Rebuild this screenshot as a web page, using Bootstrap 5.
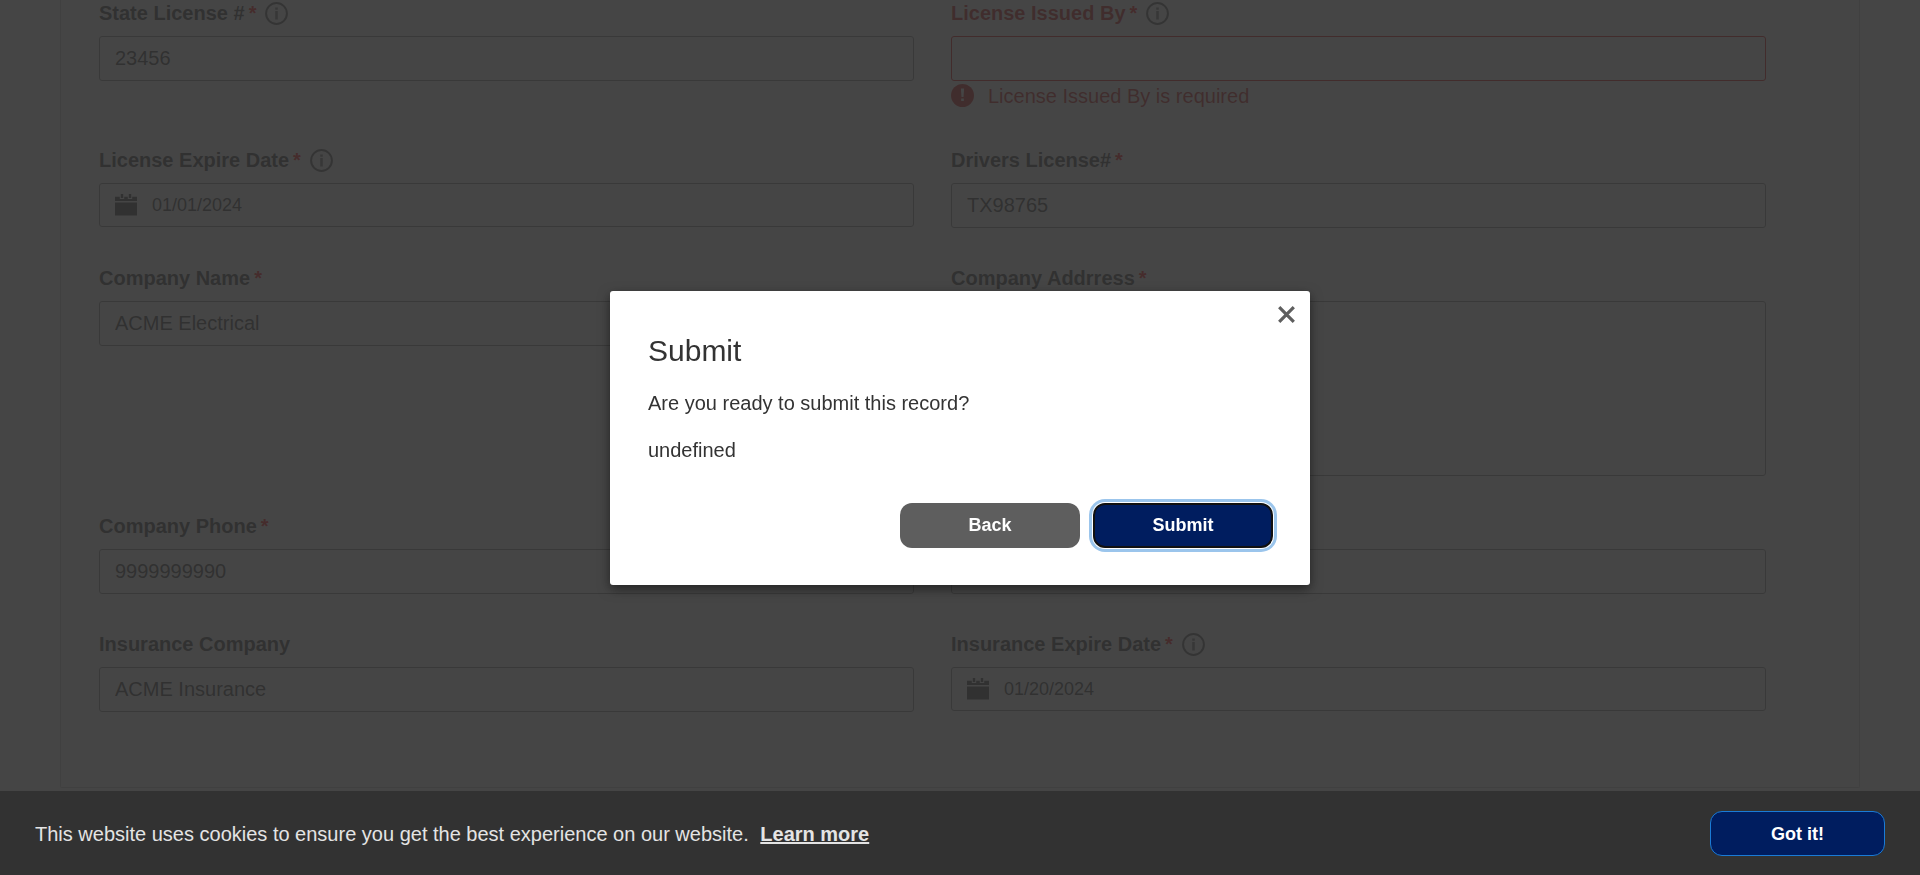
<!DOCTYPE html>
<html lang="en">
<head>
<meta charset="utf-8">
<meta name="viewport" content="width=device-width, initial-scale=1">
<title>Contractor License</title>
<link href="https://cdn.jsdelivr.net/npm/bootstrap@5.3.0/dist/css/bootstrap.min.css" rel="stylesheet">
<style>
  body { font-family: "Liberation Sans", Arial, sans-serif; font-size: 20px; line-height: 24px; color: #333; background: #fff; overflow: hidden; }
  .form-panel { margin: 0 60px; padding: 1px 93px 37px 38px; border: 1px solid #c8c8c8; border-top: 0; border-radius: 0 0 2px 2px; }
  .form-panel .row { --bs-gutter-x: 37px; }
  .field { padding-bottom: 38px; }
  .field-head { height: 24px; margin-bottom: 11px; }
  .field-head label { font-weight: 700; }
  .req { color: #f00; font-weight: 700; margin-left: 4px; }
  .info { margin-left: 9px; color: #555; line-height: 0; }
  .form-panel .form-control, .date-box { font-size: 20px; line-height: 24px; color: #333; border: 1px solid #888; border-radius: 3px; padding: 9px 15px; height: 45px; }
  .form-panel textarea.form-control { height: 175px; resize: none; }
  .form-panel .is-bad { border-color: #d00; }
  .bad-text { color: #c11; }
  .bad-note { height: 29px; }
  .bad-note svg { margin-right: 14px; }
  .date-box { height: 44px; gap: 15px; }
  .date-box input { border: 0; padding: 0; font-size: 18px; color: #333; background: none; outline: 0; }
  .veil { background: #313131; --bs-backdrop-opacity: .9; }
  .modal-dialog { --bs-modal-width: 700px; }
  .modal-content { border: 0; border-radius: 3px; color: #333; padding: 38px 37px 37px 38px; box-shadow: 0 4px 12px rgba(0,0,0,.5); }
  .modal-title { font-size: 30px; font-weight: 400; line-height: 44px; margin-bottom: 18px; }
  .modal-content p { margin-bottom: 23px; }
  .modal-actions { gap: 13px; margin-top: 18px; }
  .pill { height: 45px; width: 180px; border-radius: 12px; font-size: 18px; font-weight: 700; line-height: 24px; color: #fff; padding: 0; border: 0; }
  .pill-grey { background: #5e5e5e; }
  .pill-navy { background: #001d5f; }
  .pill-active { border: 2px solid #111; box-shadow: 0 0 0 1px #fff, 0 0 0 4px #9bc5ec; }
  .modal-x { position: absolute; top: 15px; right: 15px; width: 17px; height: 17px; padding: 0; border: 0; background: none; line-height: 0; color: #5e5e5e; }
  .cookie-bar { z-index: 1090; background: #323232; color: #e4e4e4; padding: 20px 35px 19px; }
  .cookie-bar a { color: #e4e4e4; font-weight: 700; margin-left: 6px; }
  .cookie-bar .pill { width: 175px; border: 1px solid #1a7bd6; }
</style>
</head>
<body>
<svg class="d-none" aria-hidden="true">
  <symbol id="i-info" viewBox="0 0 23 23"><circle cx="11.5" cy="11.5" r="10.4" fill="none" stroke="currentColor" stroke-width="2"/><path fill="currentColor" fill-opacity=".85" d="M10.200 5.500h2.600v2.300h-2.600zM10.200 9h2.600v8.500h-2.600z"/></symbol>
  <symbol id="i-cal" viewBox="0 0 22 22"><path fill="currentColor" d="M0 2.700h4.800v2.200h4.400V2.700h3.600v2.200h4.400V2.700H22v4.300H0zM0 8.600h22V21.600H0zM5.800 0h2.400v4H5.800zM13.800 0h2.400v4h-2.400z"/></symbol>
</svg>

<main class="form-panel">
  <form>
    <div class="row">
      <div class="col-6 field">
        <div class="field-head d-flex align-items-center"><label for="lic">State License #</label><span class="req">*</span><span class="info"><svg width="23" height="23"><use href="#i-info"/></svg></span></div>
        <input class="form-control" id="lic" type="text" value="23456">
      </div>
      <div class="col-6 field">
        <div class="field-head d-flex align-items-center"><label class="bad-text" for="issuer">License Issued By</label><span class="req">*</span><span class="info"><svg width="23" height="23"><use href="#i-info"/></svg></span></div>
        <input class="form-control is-bad" id="issuer" type="text">
        <div class="bad-note bad-text d-flex align-items-center"><svg width="23" height="23" viewBox="0 0 23 23"><circle cx="11.5" cy="11.5" r="11.5" fill="currentColor"/><path fill="#fff" d="M9.900 4.500h3.200l-.6 8.500h-2zM10.200 14.500h2.600v2.500h-2.600z"/></svg>License Issued By is required</div>
      </div>
    </div>
    <div class="row">
      <div class="col-6 field">
        <div class="field-head d-flex align-items-center"><label for="exp">License Expire Date</label><span class="req">*</span><span class="info"><svg width="23" height="23"><use href="#i-info"/></svg></span></div>
        <div class="date-box d-flex align-items-center"><svg width="22" height="22"><use href="#i-cal"/></svg><input class="flex-grow-1" id="exp" type="text" value="01/01/2024"></div>
      </div>
      <div class="col-6 field">
        <div class="field-head d-flex align-items-center"><label for="drv">Drivers License#</label><span class="req">*</span></div>
        <input class="form-control" id="drv" type="text" value="TX98765">
      </div>
    </div>
    <div class="row">
      <div class="col-6 field">
        <div class="field-head d-flex align-items-center"><label for="co">Company Name</label><span class="req">*</span></div>
        <input class="form-control" id="co" type="text" value="ACME Electrical">
      </div>
      <div class="col-6 field">
        <div class="field-head d-flex align-items-center"><label for="addr">Company Addrress</label><span class="req">*</span></div>
        <textarea class="form-control" id="addr"></textarea>
      </div>
    </div>
    <div class="row">
      <div class="col-6 field">
        <div class="field-head d-flex align-items-center"><label for="tel">Company Phone</label><span class="req">*</span></div>
        <input class="form-control" id="tel" type="text" value="9999999990">
      </div>
      <div class="col-6 field">
        <div class="field-head"></div>
        <input class="form-control" type="text" aria-label="Company contact">
      </div>
    </div>
    <div class="row">
      <div class="col-6 field">
        <div class="field-head d-flex align-items-center"><label for="ins">Insurance Company</label></div>
        <input class="form-control" id="ins" type="text" value="ACME Insurance">
      </div>
      <div class="col-6 field">
        <div class="field-head d-flex align-items-center"><label for="insexp">Insurance Expire Date</label><span class="req">*</span><span class="info"><svg width="23" height="23"><use href="#i-info"/></svg></span></div>
        <div class="date-box d-flex align-items-center"><svg width="22" height="22"><use href="#i-cal"/></svg><input class="flex-grow-1" id="insexp" type="text" value="01/20/2024"></div>
      </div>
    </div>
  </form>
</main>

<div class="modal-backdrop veil show"></div>
<div class="modal d-block" role="dialog" aria-modal="true" aria-labelledby="dlg-title">
  <div class="modal-dialog modal-dialog-centered">
    <div class="modal-content">
      <button class="modal-x" type="button" aria-label="Close"><svg width="17" height="17" viewBox="0 0 17 17" stroke="currentColor" stroke-width="3.200"><path d="M1.200 1.200l14.600 14.600M15.800 1.200l-14.600 14.600"/></svg></button>
      <h2 class="modal-title" id="dlg-title">Submit</h2>
      <p>Are you ready to submit this record?</p>
      <p>undefined</p>
      <div class="modal-actions d-flex justify-content-end">
        <button class="btn pill pill-grey" type="button">Back</button>
        <button class="btn pill pill-navy pill-active" type="button">Submit</button>
      </div>
    </div>
  </div>
</div>

<div class="cookie-bar fixed-bottom d-flex align-items-center justify-content-between">
  <div>This website uses cookies to ensure you get the best experience on our website. <a href="#">Learn more</a></div>
  <button class="btn pill pill-navy" type="button">Got it!</button>
</div>
<script src="https://cdn.jsdelivr.net/npm/bootstrap@5.3.0/dist/js/bootstrap.bundle.min.js"></script>
</body>
</html>
